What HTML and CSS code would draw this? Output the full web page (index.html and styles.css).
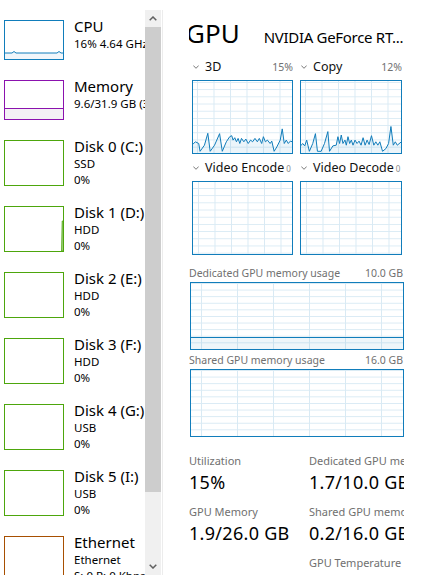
FILE: index.html
```html
<!DOCTYPE html>
<html>
<head>
<meta charset="utf-8">
<title>Task Manager - GPU</title>
<link rel="stylesheet" href="styles.css">
</head>
<body>
<div class="app">
  <aside class="sidebar">
    <div class="list">
      <div class="item short">
        <div class="thumb cpu">
          <svg class="fill-svg" viewBox="0 0 58 38" preserveAspectRatio="none">
            <polygon points="0,32 7,32 9,30.5 11,32 52,32 54,30.5 56,32 58,32 58,38 0,38" fill="#f1f6fa" stroke="none"/>
            <polyline points="0,32 7,32 9,30.5 11,32 52,32 54,30.5 56,32 58,32" fill="none" stroke="#117dbb" stroke-width="1" vector-effect="non-scaling-stroke"/>
          </svg>
        </div>
        <div class="info"><div class="name">CPU</div><div class="sub">16% 4.64 GHz</div></div>
      </div>
      <div class="item short">
        <div class="thumb mem"><div class="mem-level"></div></div>
        <div class="info"><div class="name">Memory</div><div class="sub">9.6/31.9 GB (30%)</div></div>
      </div>
      <div class="item">
        <div class="thumb disk"></div>
        <div class="info"><div class="name">Disk 0 (C:)</div><div class="sub">SSD</div><div class="sub">0%</div></div>
      </div>
      <div class="item">
        <div class="thumb disk">
          <svg class="fill-svg" viewBox="0 0 58 44" preserveAspectRatio="none">
            <polygon points="56.5,44 57.2,14 58,14 58,44" fill="#cfe6bf" stroke="#4da60c" stroke-width="0.8" vector-effect="non-scaling-stroke"/>
          </svg>
        </div>
        <div class="info"><div class="name">Disk 1 (D:)</div><div class="sub">HDD</div><div class="sub">0%</div></div>
      </div>
      <div class="item">
        <div class="thumb disk"></div>
        <div class="info"><div class="name">Disk 2 (E:)</div><div class="sub">HDD</div><div class="sub">0%</div></div>
      </div>
      <div class="item">
        <div class="thumb disk"></div>
        <div class="info"><div class="name">Disk 3 (F:)</div><div class="sub">HDD</div><div class="sub">0%</div></div>
      </div>
      <div class="item">
        <div class="thumb disk"></div>
        <div class="info"><div class="name">Disk 4 (G:)</div><div class="sub">USB</div><div class="sub">0%</div></div>
      </div>
      <div class="item">
        <div class="thumb disk"></div>
        <div class="info"><div class="name">Disk 5 (I:)</div><div class="sub">USB</div><div class="sub">0%</div></div>
      </div>
      <div class="item">
        <div class="thumb eth"></div>
        <div class="info"><div class="name">Ethernet</div><div class="sub">Ethernet</div><div class="sub">S: 0 R: 0 Kbps</div></div>
      </div>
    </div>
    <div class="scrollbar">
      <div class="sb-btn">
        <svg width="8" height="5" viewBox="0 0 8 5"><polyline points="0.7,4.3 4,1 7.3,4.3" fill="none" stroke="#606060" stroke-width="1.5"/></svg>
      </div>
      <div class="sb-thumb"></div>
      <div class="sb-track"></div>
      <div class="sb-btn">
        <svg width="8" height="5" viewBox="0 0 8 5"><polyline points="0.7,0.7 4,4 7.3,0.7" fill="none" stroke="#606060" stroke-width="1.5"/></svg>
      </div>
    </div>
    <div class="divider"></div>
  </aside>

  <main class="detail">
    <div class="header">
      <span class="title">GPU</span>
      <span class="model">NVIDIA GeForce RT...</span>
    </div>

    <div class="engines">
      <div class="engine">
        <div class="eng-head">
          <svg class="chev" width="6" height="4" viewBox="0 0 6 4"><polyline points="0.3,0.5 3,3.3 5.7,0.5" fill="none" stroke="#7a7a7a" stroke-width="1"/></svg>
          <span class="eng-name">3D</span><span class="pct">15%</span>
        </div>
        <div class="eng-graph">
          <svg class="fill-svg" viewBox="21 21 294 212" preserveAspectRatio="none">
            <polygon fill="rgba(17,125,187,0.08)" stroke="none" points="20,208 28,200 38,205 42,228 55,210 65,175 72,228 85,210 100,176 108,228 120,200 130,185 136,182 140,195 145,188 150,200 155,190 160,205 165,190 172,200 178,192 185,205 192,195 198,200 205,190 212,200 218,190 225,205 230,185 236,200 242,195 250,205 255,198 262,228 270,215 280,195 286,162 292,205 298,195 304,205 310,198 316,200 316,233 20,233"/>
            <polyline fill="none" stroke="#117dbb" stroke-width="1" vector-effect="non-scaling-stroke" points="20,208 28,200 38,205 42,228 55,210 65,175 72,228 85,210 100,176 108,228 120,200 130,185 136,182 140,195 145,188 150,200 155,190 160,205 165,190 172,200 178,192 185,205 192,195 198,200 205,190 212,200 218,190 225,205 230,185 236,200 242,195 250,205 255,198 262,228 270,215 280,195 286,162 292,205 298,195 304,205 310,198 316,200"/>
          </svg>
        </div>
      </div>
      <div class="engine">
        <div class="eng-head">
          <svg class="chev" width="6" height="4" viewBox="0 0 6 4"><polyline points="0.3,0.5 3,3.3 5.7,0.5" fill="none" stroke="#7a7a7a" stroke-width="1"/></svg>
          <span class="eng-name">Copy</span><span class="pct">12%</span>
        </div>
        <div class="eng-graph">
          <svg class="fill-svg" viewBox="15 21 298 212" preserveAspectRatio="none">
            <polygon fill="rgba(17,125,187,0.08)" stroke="none" points="14,212 20,205 26,212 32,195 36,212 40,228 50,205 58,176 64,228 75,228 85,205 95,170 100,228 110,212 120,210 125,185 130,205 135,180 140,205 146,195 150,210 155,185 160,205 165,195 170,210 176,195 182,205 188,198 194,210 200,188 206,210 212,195 218,208 225,182 232,210 238,200 244,210 250,200 258,228 268,220 276,205 283,155 290,210 296,200 302,210 314,200 314,233 14,233"/>
            <polyline fill="none" stroke="#117dbb" stroke-width="1" vector-effect="non-scaling-stroke" points="14,212 20,205 26,212 32,195 36,212 40,228 50,205 58,176 64,228 75,228 85,205 95,170 100,228 110,212 120,210 125,185 130,205 135,180 140,205 146,195 150,210 155,185 160,205 165,195 170,210 176,195 182,205 188,198 194,210 200,188 206,210 212,195 218,208 225,182 232,210 238,200 244,210 250,200 258,228 268,220 276,205 283,155 290,210 296,200 302,210 314,200"/>
          </svg>
        </div>
      </div>
      <div class="engine">
        <div class="eng-head">
          <svg class="chev" width="6" height="4" viewBox="0 0 6 4"><polyline points="0.3,0.5 3,3.3 5.7,0.5" fill="none" stroke="#7a7a7a" stroke-width="1"/></svg>
          <span class="eng-name">Video Encode</span><span class="tiny">0</span>
        </div>
        <div class="eng-graph video"></div>
      </div>
      <div class="engine">
        <div class="eng-head">
          <svg class="chev" width="6" height="4" viewBox="0 0 6 4"><polyline points="0.3,0.5 3,3.3 5.7,0.5" fill="none" stroke="#7a7a7a" stroke-width="1"/></svg>
          <span class="eng-name">Video Decode</span><span class="tiny">0</span>
        </div>
        <div class="eng-graph video"></div>
      </div>
    </div>

    <div class="mem-section first">
      <div class="mem-label"><span>Dedicated GPU memory usage</span><span>10.0 GB</span></div>
      <div class="mem-graph"><div class="mem-usage"></div></div>
    </div>
    <div class="mem-section">
      <div class="mem-label"><span>Shared GPU memory usage</span><span>16.0 GB</span></div>
      <div class="mem-graph"></div>
    </div>

    <div class="stats">
      <div class="stat"><div class="stat-label">Utilization</div><div class="stat-value">15%</div></div>
      <div class="stat"><div class="stat-label">Dedicated GPU memory</div><div class="stat-value">1.7/10.0 GB</div></div>
      <div class="stat"><div class="stat-label">GPU Memory</div><div class="stat-value">1.9/26.0 GB</div></div>
      <div class="stat"><div class="stat-label">Shared GPU memory</div><div class="stat-value">0.2/16.0 GB</div></div>
      <div class="stat"></div>
      <div class="stat"><div class="stat-label">GPU Temperature</div></div>
    </div>
  </main>
</div>
</body>
</html>
```

FILE: styles.css
```css
html, body {
  margin: 0;
  padding: 0;
  background: #ffffff;
}

body {
  width: 430px;
  height: 583px;
  overflow: hidden;
  font-family: "Noto Sans", "Open Sans", sans-serif;
  color: #000000;
}

.app {
  display: flex;
  align-items: flex-start;
}

/* ---------- sidebar ---------- */
.sidebar {
  display: flex;
  flex: none;
  margin-top: 10px;
  height: 565px;
}

.list {
  width: 145px;
  height: 565px;
  padding-top: 7px;
  box-sizing: border-box;
  overflow: hidden;
}

.item {
  display: flex;
  align-items: flex-start;
  height: 66px;
}

.item.short {
  height: 60px;
}

.thumb {
  flex: none;
  width: 60px;
  height: 46px;
  margin: 3px 10px 0 4px;
  box-sizing: border-box;
  border: 1px solid #4da60c;
  display: flex;
  flex-direction: column;
  justify-content: flex-end;
  background: #ffffff;
}

.item.short .thumb {
  height: 40px;
}

.thumb.cpu {
  border-color: #117dbb;
}

.thumb.mem {
  border-color: #8b12ae;
}

.thumb.eth {
  border-color: #a74f01;
}

.mem-level {
  height: 11px;
  box-sizing: border-box;
  border-top: 1px solid #8b12ae;
  background: #f4f1f5;
}

.fill-svg {
  display: block;
  width: 100%;
  height: 100%;
}

.info {
  min-width: 0;
  white-space: nowrap;
}

.name {
  font-size: 15px;
  line-height: 19px;
}

.sub {
  font-size: 11.5px;
  line-height: 16px;
}

/* ---------- scrollbar ---------- */
.scrollbar {
  width: 16px;
  display: flex;
  flex-direction: column;
  background: #f0f0f0;
}

.sb-btn {
  height: 17px;
  flex: none;
  display: flex;
  align-items: center;
  justify-content: center;
}

.sb-btn svg {
  display: block;
}

.sb-thumb {
  height: 465px;
  flex: none;
  background: #cdcdcd;
}

.sb-track {
  flex: 1;
}

.divider {
  width: 1px;
  margin-left: 1px;
  background: #ececec;
}

/* ---------- detail ---------- */
.detail {
  flex: none;
  margin-left: 26px;
  width: 215px;
  height: 583px;
  overflow: hidden;
}

.header {
  display: flex;
  align-items: baseline;
  height: 30px;
  margin-top: 18px;
  white-space: nowrap;
}

.title {
  font-size: 26px;
  line-height: 30px;
  margin-left: -3px;
}

.model {
  font-size: 15px;
  margin-left: 24px;
  letter-spacing: -0.3px;
}

.engines {
  display: grid;
  grid-template-columns: 101px 102px;
  column-gap: 7px;
  row-gap: 6px;
  margin: 11px 0 0 3px;
}

.eng-head {
  display: flex;
  align-items: baseline;
  height: 16px;
  line-height: 16px;
  white-space: nowrap;
  overflow: hidden;
}

.chev {
  flex: none;
  align-self: center;
  margin: 0 6px 0 1px;
}

.eng-name {
  font-size: 12.5px;
  color: #111111;
}

.pct {
  margin-left: auto;
  font-size: 10.5px;
  color: #707070;
}

.tiny {
  margin-left: 2px;
  font-size: 8px;
  color: #8a8a8a;
}

.eng-graph {
  height: 74px;
  margin-top: 5px;
  box-sizing: border-box;
  border: 1px solid #117dbb;
  background-image:
    linear-gradient(to right, #d9eaf4 1px, transparent 1px),
    linear-gradient(to bottom, #d9eaf4 1px, transparent 1px);
  background-size: 16.5px 100%, 100% 10%;
  background-position: 4px 0, 0 1px;
}

.eng-graph.video {
  background-position: 5px 0, 0 6px;
}

.mem-section {
  width: 215px;
  margin-top: 3px;
}

.mem-section.first {
  margin-top: 11px;
}

.mem-label {
  display: flex;
  justify-content: space-between;
  padding-right: 1px;
  font-size: 10.5px;
  line-height: 14px;
  color: #707070;
  white-space: nowrap;
}

.mem-graph {
  width: 214px;
  height: 68px;
  margin: 2px 0 0 1px;
  box-sizing: border-box;
  border: 1px solid #117dbb;
  display: flex;
  flex-direction: column;
  justify-content: flex-end;
  background-image:
    linear-gradient(to right, #d9eaf4 1px, transparent 1px),
    linear-gradient(to bottom, #d9eaf4 1px, transparent 1px);
  background-size: 36px 100%, 100% 10%;
  background-position: 10px 0, 0 0;
}

.mem-usage {
  height: 12px;
  box-sizing: border-box;
  border-top: 1px solid #117dbb;
  background: rgba(17, 125, 187, 0.07);
}

.stats {
  display: grid;
  grid-template-columns: 120px 120px;
  row-gap: 10px;
  margin-top: 16px;
}

.stat {
  white-space: nowrap;
  overflow: hidden;
}

.stat-label {
  font-size: 11px;
  line-height: 15px;
  color: #707070;
}

.stat-value {
  margin-top: 3px;
  font-size: 18px;
  line-height: 23px;
  letter-spacing: 0.3px;
  color: #000000;
}
```
